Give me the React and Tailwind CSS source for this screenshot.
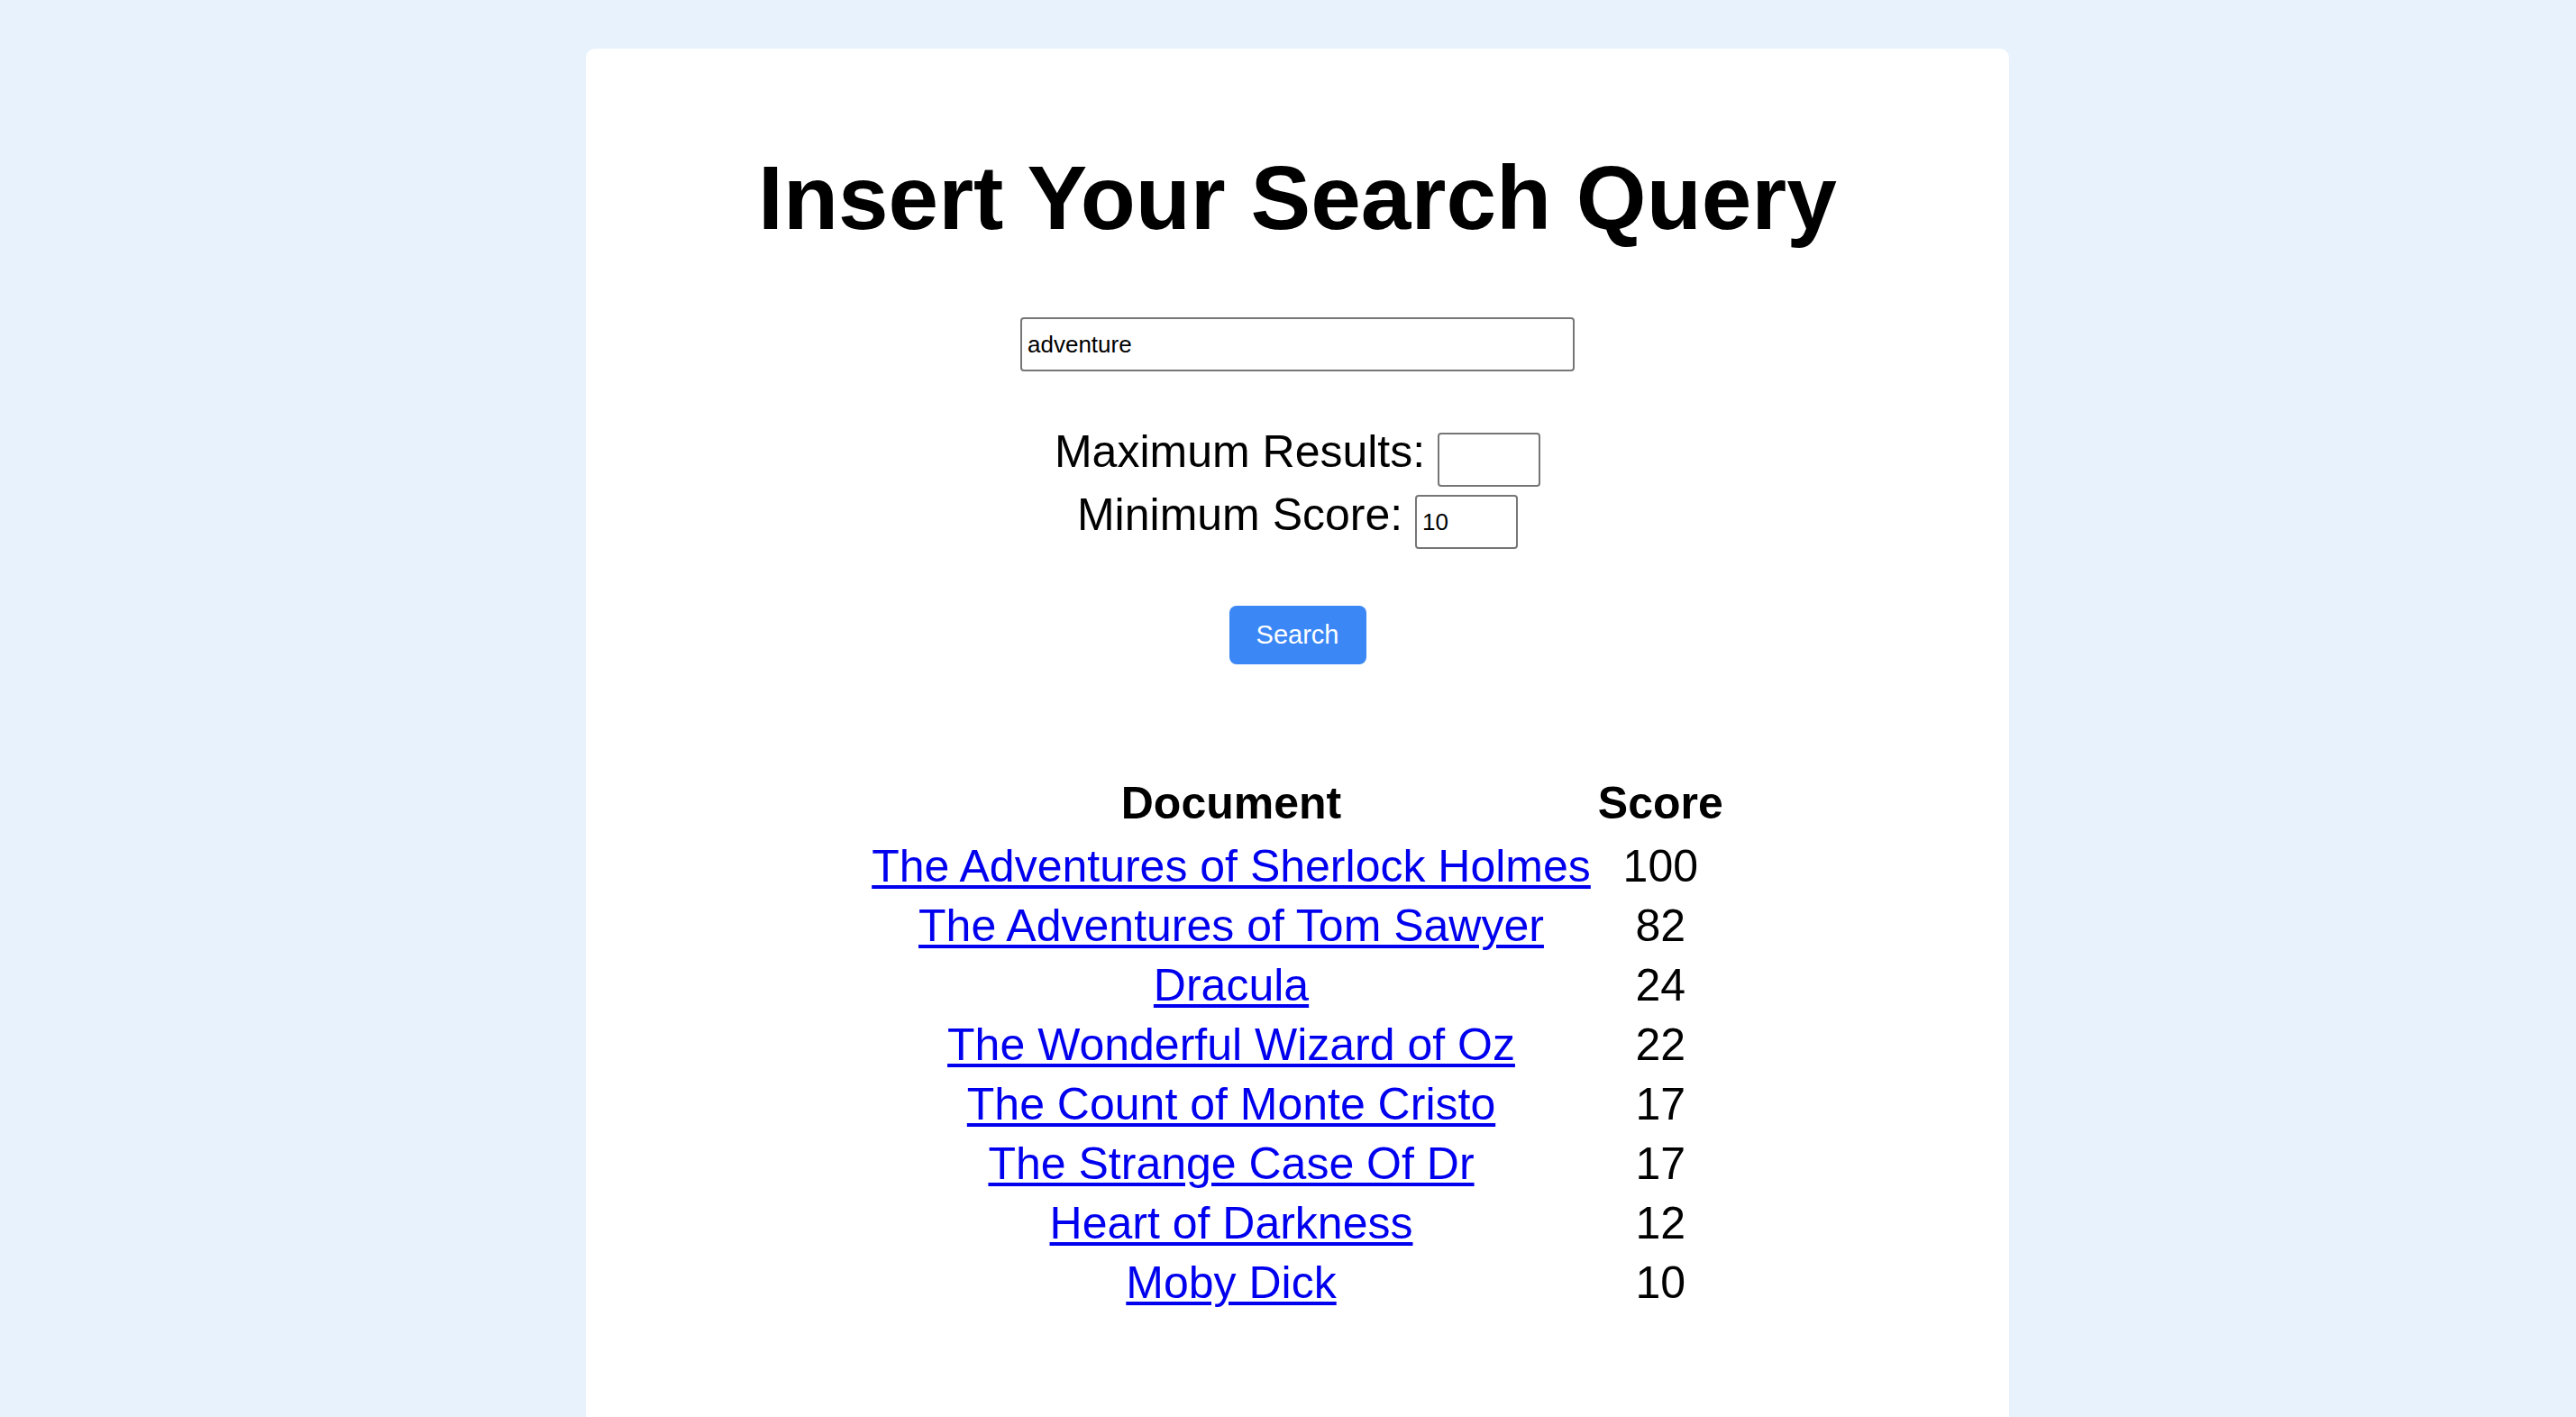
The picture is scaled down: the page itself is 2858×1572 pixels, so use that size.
import React, { useState } from 'react';

const results = [
  { title: 'The Adventures of Sherlock Holmes', score: 100 },
  { title: 'The Adventures of Tom Sawyer', score: 82 },
  { title: 'Dracula', score: 24 },
  { title: 'The Wonderful Wizard of Oz', score: 22 },
  { title: 'The Count of Monte Cristo', score: 17 },
  { title: 'The Strange Case Of Dr', score: 17 },
  { title: 'Heart of Darkness', score: 12 },
  { title: 'Moby Dick', score: 10 },
];

export default function App() {
  const [query, setQuery] = useState('adventure');
  const [maxResults, setMaxResults] = useState('');
  const [minScore, setMinScore] = useState('10');

  return (
    <div className="min-h-screen bg-[#e8f2fc] pl-[21px] pt-[54px] font-['Liberation_Sans',Arial,sans-serif] leading-[1.15] text-black">
      <div className="mx-auto w-[1579px] rounded-[10px] bg-white pt-[108px] pb-[160px] text-center">
        <h1 className="text-[100px] leading-[114px] font-bold">Insert Your Search Query</h1>

        <input
          type="text"
          value={query}
          onChange={(e) => setQuery(e.target.value)}
          className="mt-[76px] h-[60px] w-[615px] rounded-[4px] border-2 border-[#767676] px-[6px] text-[26px] outline-none"
        />

        <div className="mt-[61px] text-[50px] leading-[57.5px]">
          Maximum Results:{' '}
          <input
            type="text"
            value={maxResults}
            onChange={(e) => setMaxResults(e.target.value)}
            className="inline-block h-[60px] w-[114px] rounded-[4px] border-2 border-[#767676] px-[6px] align-baseline text-[26px] leading-[30px] outline-none"
          />
        </div>
        <div className="mt-[3px] text-[50px] leading-[57.5px]">
          Minimum Score:{' '}
          <input
            type="text"
            value={minScore}
            onChange={(e) => setMinScore(e.target.value)}
            className="inline-block h-[60px] w-[114px] rounded-[4px] border-2 border-[#767676] px-[6px] align-baseline text-[26px] leading-[30px] outline-none"
          />
        </div>

        <button className="mt-[63px] h-[65px] w-[152px] rounded-[8px] bg-[#3b87f5] text-[29px] text-white">
          Search
        </button>

        <table className="mx-auto mt-[119px] border-separate border-spacing-[4px] text-[50px] leading-[58px]">
          <thead>
            <tr>
              <th className="px-[2px] pt-[2px] pb-[6px] font-bold">Document</th>
              <th className="px-[2px] pt-[2px] pb-[6px] font-bold">Score</th>
            </tr>
          </thead>
          <tbody>
            {results.map((r) => (
              <tr key={r.title}>
                <td className="p-[2px] text-center">
                  <a href="#" className="text-[#0000ee] underline decoration-[4px] underline-offset-[4px]">
                    {r.title}
                  </a>
                </td>
                <td className="p-[2px] text-center">{r.score}</td>
              </tr>
            ))}
          </tbody>
        </table>
      </div>
    </div>
  );
}
